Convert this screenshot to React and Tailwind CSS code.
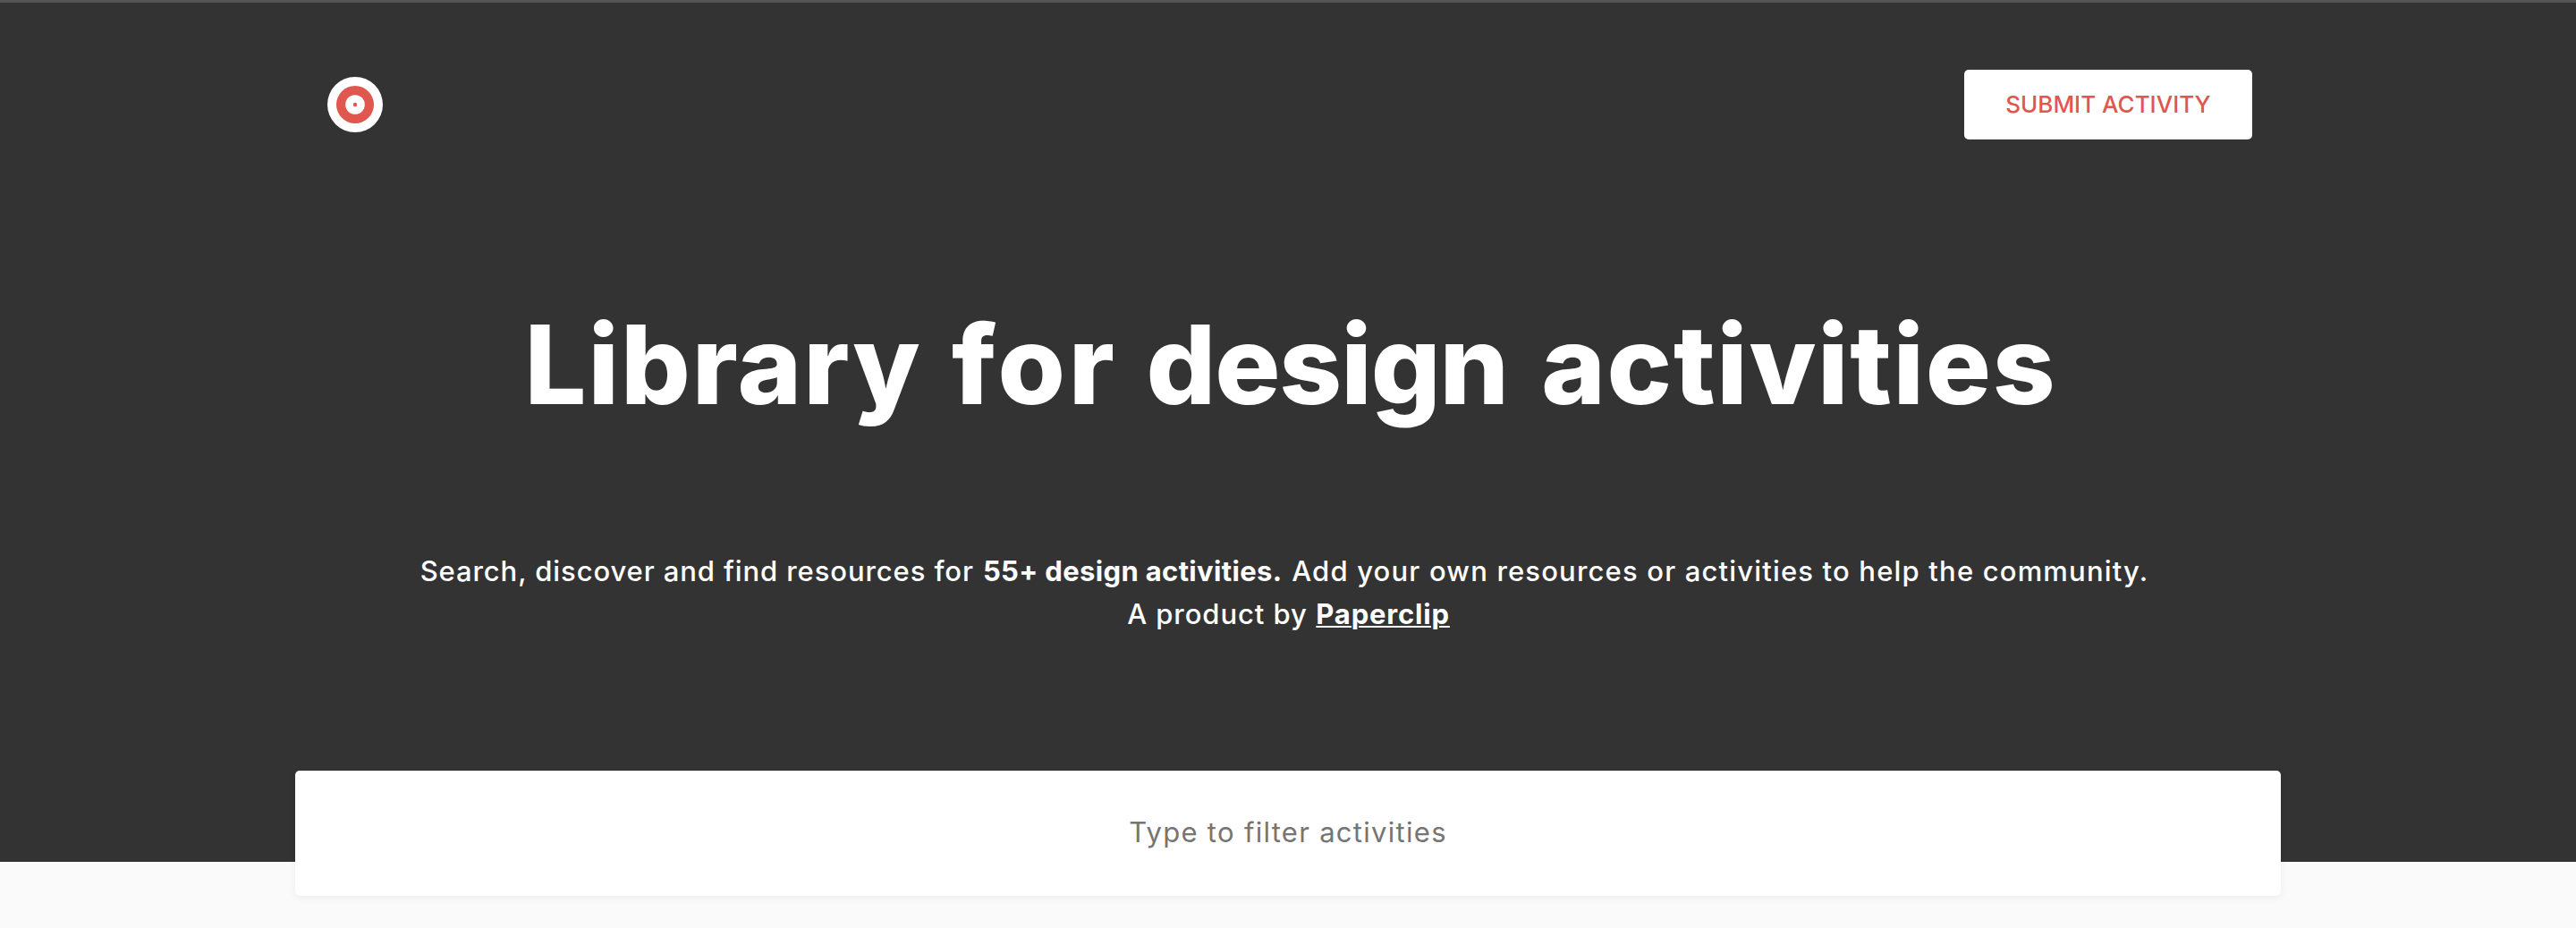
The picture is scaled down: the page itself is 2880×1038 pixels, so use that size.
import { useState } from "react";

function Logo() {
  return (
    <svg viewBox="0 0 62 62" className="h-[62px] w-[62px]">
      <circle cx="31" cy="31" r="31" fill="#ffffff" />
      <circle cx="31" cy="31" r="21" fill="#e0574f" />
      <circle cx="31" cy="31" r="10.8" fill="#ffffff" />
      <circle cx="31" cy="31" r="2.2" fill="#e0574f" />
    </svg>
  );
}

export default function App() {
  const [filter, setFilter] = useState("");

  return (
    <div className="min-h-screen bg-[#fafafa] font-['Inter',sans-serif]">
      {/* Hero */}
      <div className="h-[964px] border-t-[3px] border-[#555555] bg-[#333333] pt-[75px] text-white">
        <div className="mx-auto w-[2220px]">
          <header className="flex items-center justify-between pr-8 pl-9">
            <a href="#">
              <Logo />
            </a>
            <button className="h-[78px] w-[322px] rounded-[5px] bg-white pb-0.5 text-[26px] font-medium text-[#e0574f]">
              SUBMIT ACTIVITY
            </button>
          </header>

          <h1 className="mt-[188px] flex justify-center pl-1.5 text-[122px] leading-[128px] font-extrabold whitespace-nowrap">
            <span className="mr-[33.5px] tracking-[1.93px]">Library</span>
            <span className="mr-[31.9px] tracking-[3.65px]">for</span>
            <span className="mr-[37.2px] tracking-[-1.1px]">design</span>
            <span className="tracking-[1.68px]">activities</span>
          </h1>

          <div className="mt-[143px] text-[31px] leading-[48px] font-medium whitespace-nowrap">
            <p className="flex justify-center pr-2">
              <span className="tracking-[0.9px]">Search, discover and find resources for</span>
              <b className="mr-[10.7px] ml-[10.1px] font-bold tracking-[0.35px]">55+ design activities.</b>
              <span className="tracking-[1.17px]">Add your own resources or activities to help the community.</span>
            </p>
            <p className="flex justify-center pl-px">
              <span className="mr-[9.6px] tracking-[0.93px]">A product by</span>
              <a href="#" className="font-bold tracking-[0.82px] underline decoration-2 underline-offset-2">
                Paperclip
              </a>
            </p>
          </div>

          {/* Filter */}
          <input
            type="text"
            value={filter}
            onChange={(e) => setFilter(e.target.value)}
            placeholder="Type to filter activities"
            className="mt-[151px] block h-[140px] w-full rounded-[5px] bg-white pb-[3px] text-center text-[31px] tracking-[1.29px] text-[#333333] shadow-[0_2px_8px_rgba(0,0,0,0.06)] outline-none placeholder:text-[#757575]"
          />
        </div>
      </div>
    </div>
  );
}
